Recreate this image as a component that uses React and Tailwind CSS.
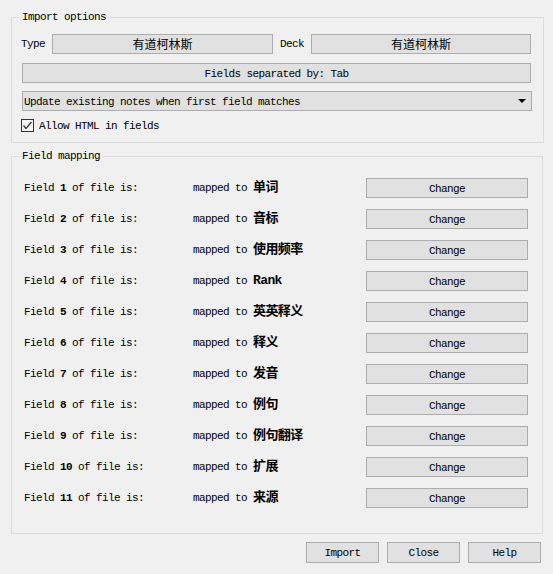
import React from "react";

const mono = "font-['Liberation_Mono','Noto_Sans_CJK_SC',monospace] text-[11px] tracking-[-0.6px] leading-[14px] text-black";

const fields = ["单词", "音标", "使用频率", "Rank", "英英释义", "释义", "发音", "例句", "例句翻译", "扩展", "来源"];

function Box({ className = "", children }) {
  return (
    <div className={`h-[20px] bg-[#e1e1e1] border border-[#adadad] flex items-center ${className}`}>
      {children}
    </div>
  );
}

function FieldRow({ index, name }) {
  return (
    <div className="flex items-center h-[20px]">
      <div className="w-[169px] pb-[1px]">
        Field <span className="font-bold">{index}</span> of file is:
      </div>
      <div className="flex-1 flex items-center pb-[1px]">
        <span>mapped to&nbsp;</span>
        <span className="font-bold text-[13px] font-['Liberation_Mono','Noto_Sans_CJK_SC',monospace]">{name}</span>
      </div>
      <button className="w-[162px] h-[20px] bg-[#e1e1e1] border border-[#adadad] pt-[2px]">Change</button>
    </div>
  );
}

export default function App() {
  return (
    <div className={`w-[553px] h-[574px] bg-[#f0f0f0] px-[11px] pt-[10px] ${mono}`}>
      {/* Import options */}
      <fieldset className="w-[532px] border border-[#dcdcdc] p-0 m-0">
        <legend className="ml-[8px] px-[2px] leading-[14px]">Import options</legend>
        <div className="pt-[10px] pb-[10px] pl-[9px] pr-[11px]">
          <div className="flex items-center h-[20px]">
            <span className="w-[31px]">Type</span>
            <Box className="w-[221px] justify-center">
              <span className="font-['Noto_Sans_CJK_SC',sans-serif] text-[12px] tracking-normal">有道柯林斯</span>
            </Box>
            <span className="ml-[7px] w-[31px]">Deck</span>
            <Box className="w-[220px] justify-center">
              <span className="font-['Noto_Sans_CJK_SC',sans-serif] text-[12px] tracking-normal">有道柯林斯</span>
            </Box>
          </div>
          <Box className="ml-[1px] mt-[9px] w-[509px] justify-center">
            <span className="pt-[1px]">Fields separated by: Tab</span>
          </Box>
          <Box className="ml-[1px] mt-[8px] w-[510px] justify-between pl-[1px] pr-[5px]">
            <span className="pt-[1px]">Update existing notes when first field matches</span>
            <svg width="8" height="4" viewBox="0 0 8 4">
              <polygon points="0,0 8,0 4,4" fill="#000" />
            </svg>
          </Box>
          <div className="flex items-center mt-[8px] h-[13px]">
            <span className="w-[13px] h-[13px] border border-[#333] bg-[#f4f4f4] flex items-center justify-center">
              <svg width="11" height="11" viewBox="0 0 11 11">
                <polyline points="1.5,5.5 4,8.5 9.5,2" fill="none" stroke="#333" strokeWidth="1.2" />
              </svg>
            </span>
            <span className="ml-[5px]">Allow HTML in fields</span>
          </div>
        </div>
      </fieldset>

      {/* Field mapping */}
      <fieldset className="mt-[6px] w-[532px] border border-[#dcdcdc] p-0 m-0">
        <legend className="ml-[8px] px-[2px] leading-[14px]">Field mapping</legend>
        <div className="pt-[15px] pb-[25px] pl-[12px] pr-[14px] flex flex-col gap-[11px]">
          {fields.map((name, i) => (
            <FieldRow key={i} index={i + 1} name={name} />
          ))}
        </div>
      </fieldset>

      <div className="mt-[8px] flex justify-end gap-[8px] pr-[1px]">
        <button className="w-[73px] h-[21px] bg-[#e1e1e1] border border-[#adadad] pt-[1px]">Import</button>
        <button className="w-[73px] h-[21px] bg-[#e1e1e1] border border-[#adadad] pt-[1px]">Close</button>
        <button className="w-[73px] h-[21px] bg-[#e1e1e1] border border-[#adadad] pt-[1px]">Help</button>
      </div>
    </div>
  );
}
